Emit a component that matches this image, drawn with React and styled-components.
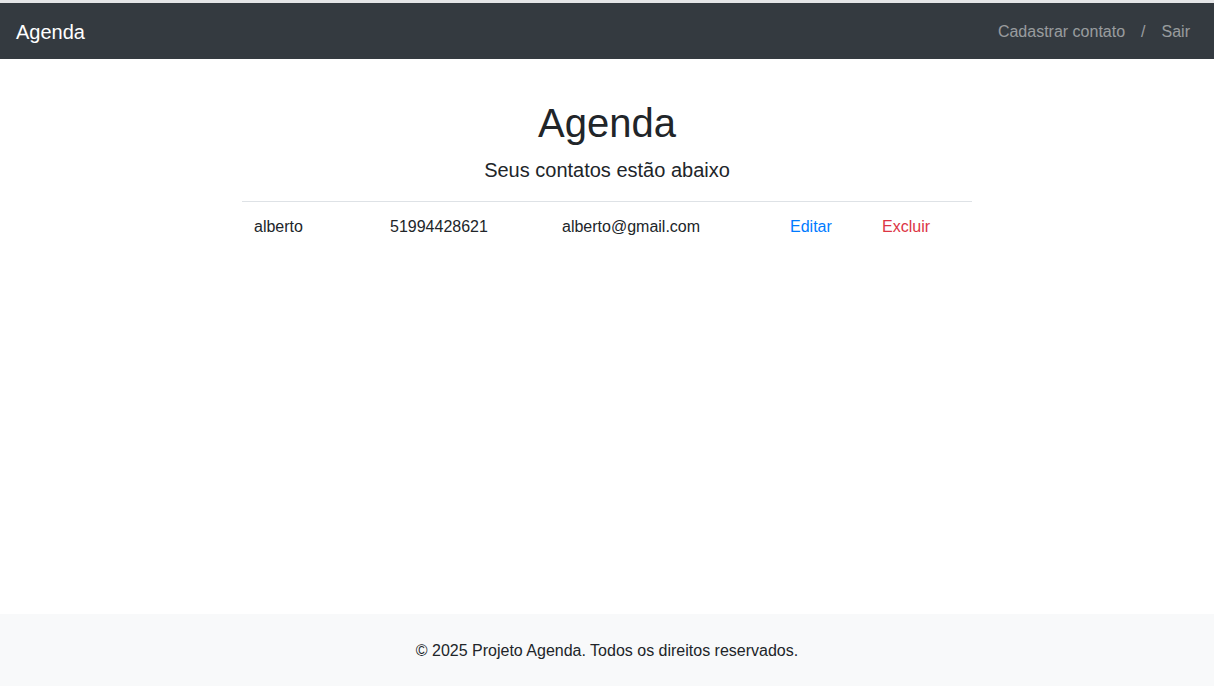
import styled, {createGlobalStyle} from "styled-components";

const GlobalStyle = createGlobalStyle`
    * {
        box-sizing: border-box;
    }
    body {
        margin: 0;
        font-family: "Liberation Sans", Arial, sans-serif;
        font-size: 16px;
        line-height: 1.5;
        color: #212529;
        background: #fff;
    }
`;

const Page = styled.div`
    display: flex;
    flex-direction: column;
    min-height: 686px;
    border-top: 3px solid #e4e5e7;
`;

const Navbar = styled.nav`
    display: flex;
    align-items: center;
    justify-content: space-between;
    height: 56px;
    padding: 9px 16px 7px;
    background: #343a40;
`;

const Brand = styled.a`
    color: #fff;
    font-size: 20px;
    line-height: 1.5;
    text-decoration: none;
`;

const NavLinks = styled.div`
    display: flex;
    align-items: center;
`;

const NavLink = styled.a`
    padding: 8px;
    color: rgba(255, 255, 255, 0.5);
    text-decoration: none;
`;

const Main = styled.main`
    flex: 1;
    width: 730px;
    margin: 0 auto;
    padding-top: 40px;
`;

const Title = styled.h1`
    margin: 0 0 11px;
    font-size: 40px;
    font-weight: 500;
    line-height: 1.2;
    text-align: center;
`;

const Subtitle = styled.h5`
    margin: 0 0 19px;
    font-size: 20px;
    font-weight: 400;
    line-height: 1.2;
    text-align: center;
`;

const Table = styled.table`
    width: 100%;
    border-collapse: collapse;
`;

const Cell = styled.td`
    width: ${(p) => p.$w}px;
    padding: 13px 12px 11px;
    border-top: 1px solid #dee2e6;
    vertical-align: top;
`;

const ActionLink = styled.a`
    color: ${(p) => (p.$danger ? "#dc3545" : "#007bff")};
    text-decoration: none;
`;

const Footer = styled.footer`
    height: 72px;
    padding: 25px 0 23px;
    background: #f8f9fa;
    text-align: center;
`;

const contatos = [
    {nome: "alberto", telefone: "51994428621", email: "alberto@gmail.com"},
];

export default function App() {
    const rows = contatos.map((contato, index) => {
        return (
            <tr key={index}>
                <Cell $w={136}>{contato.nome}</Cell>
                <Cell $w={172}>{contato.telefone}</Cell>
                <Cell $w={228}>{contato.email}</Cell>
                <Cell $w={92}>
                    <ActionLink href="#">Editar</ActionLink>
                </Cell>
                <Cell $w={102}>
                    <ActionLink href="#" $danger>
                        Excluir
                    </ActionLink>
                </Cell>
            </tr>
        );
    });

    return (
        <>
            <GlobalStyle />
            <Page>
                <Navbar>
                    <Brand href="#">Agenda</Brand>
                    <NavLinks>
                        <NavLink href="#">Cadastrar contato</NavLink>
                        <NavLink as="span">/</NavLink>
                        <NavLink href="#">Sair</NavLink>
                    </NavLinks>
                </Navbar>
                <Main>
                    <Title>Agenda</Title>
                    <Subtitle>Seus contatos estão abaixo</Subtitle>
                    <Table>
                        <tbody>{rows}</tbody>
                    </Table>
                </Main>
                <Footer>© 2025 Projeto Agenda. Todos os direitos reservados.</Footer>
            </Page>
        </>
    );
}
